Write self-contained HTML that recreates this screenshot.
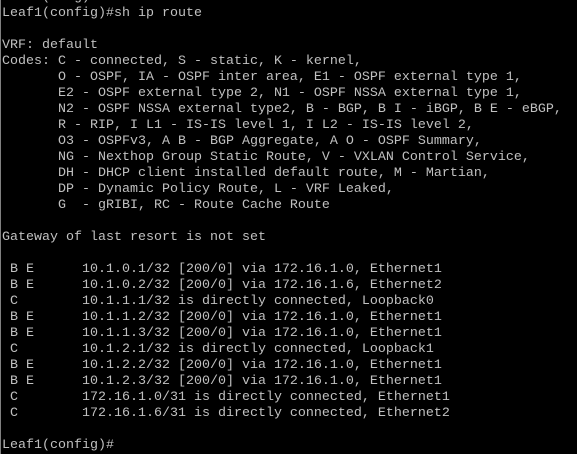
<!DOCTYPE html><html><head><style>
html,body{margin:0;background:#000;width:577px;height:454px;overflow:hidden}
body{border-left:1px solid #808080;box-sizing:border-box}
pre{position:absolute;left:2px;top:-10px;margin:0;font-family:"Liberation Mono",monospace;font-size:13.33px;line-height:16px;color:#c0c0c0}
</style></head><body><pre>     (   g)
Leaf1(config)#sh ip route

VRF: default
Codes: C - connected, S - static, K - kernel,
       O - OSPF, IA - OSPF inter area, E1 - OSPF external type 1,
       E2 - OSPF external type 2, N1 - OSPF NSSA external type 1,
       N2 - OSPF NSSA external type2, B - BGP, B I - iBGP, B E - eBGP,
       R - RIP, I L1 - IS-IS level 1, I L2 - IS-IS level 2,
       O3 - OSPFv3, A B - BGP Aggregate, A O - OSPF Summary,
       NG - Nexthop Group Static Route, V - VXLAN Control Service,
       DH - DHCP client installed default route, M - Martian,
       DP - Dynamic Policy Route, L - VRF Leaked,
       G  - gRIBI, RC - Route Cache Route

Gateway of last resort is not set

 B E      10.1.0.1/32 [200/0] via 172.16.1.0, Ethernet1
 B E      10.1.0.2/32 [200/0] via 172.16.1.6, Ethernet2
 C        10.1.1.1/32 is directly connected, Loopback0
 B E      10.1.1.2/32 [200/0] via 172.16.1.0, Ethernet1
 B E      10.1.1.3/32 [200/0] via 172.16.1.0, Ethernet1
 C        10.1.2.1/32 is directly connected, Loopback1
 B E      10.1.2.2/32 [200/0] via 172.16.1.0, Ethernet1
 B E      10.1.2.3/32 [200/0] via 172.16.1.0, Ethernet1
 C        172.16.1.0/31 is directly connected, Ethernet1
 C        172.16.1.6/31 is directly connected, Ethernet2

Leaf1(config)#</pre></body></html>
